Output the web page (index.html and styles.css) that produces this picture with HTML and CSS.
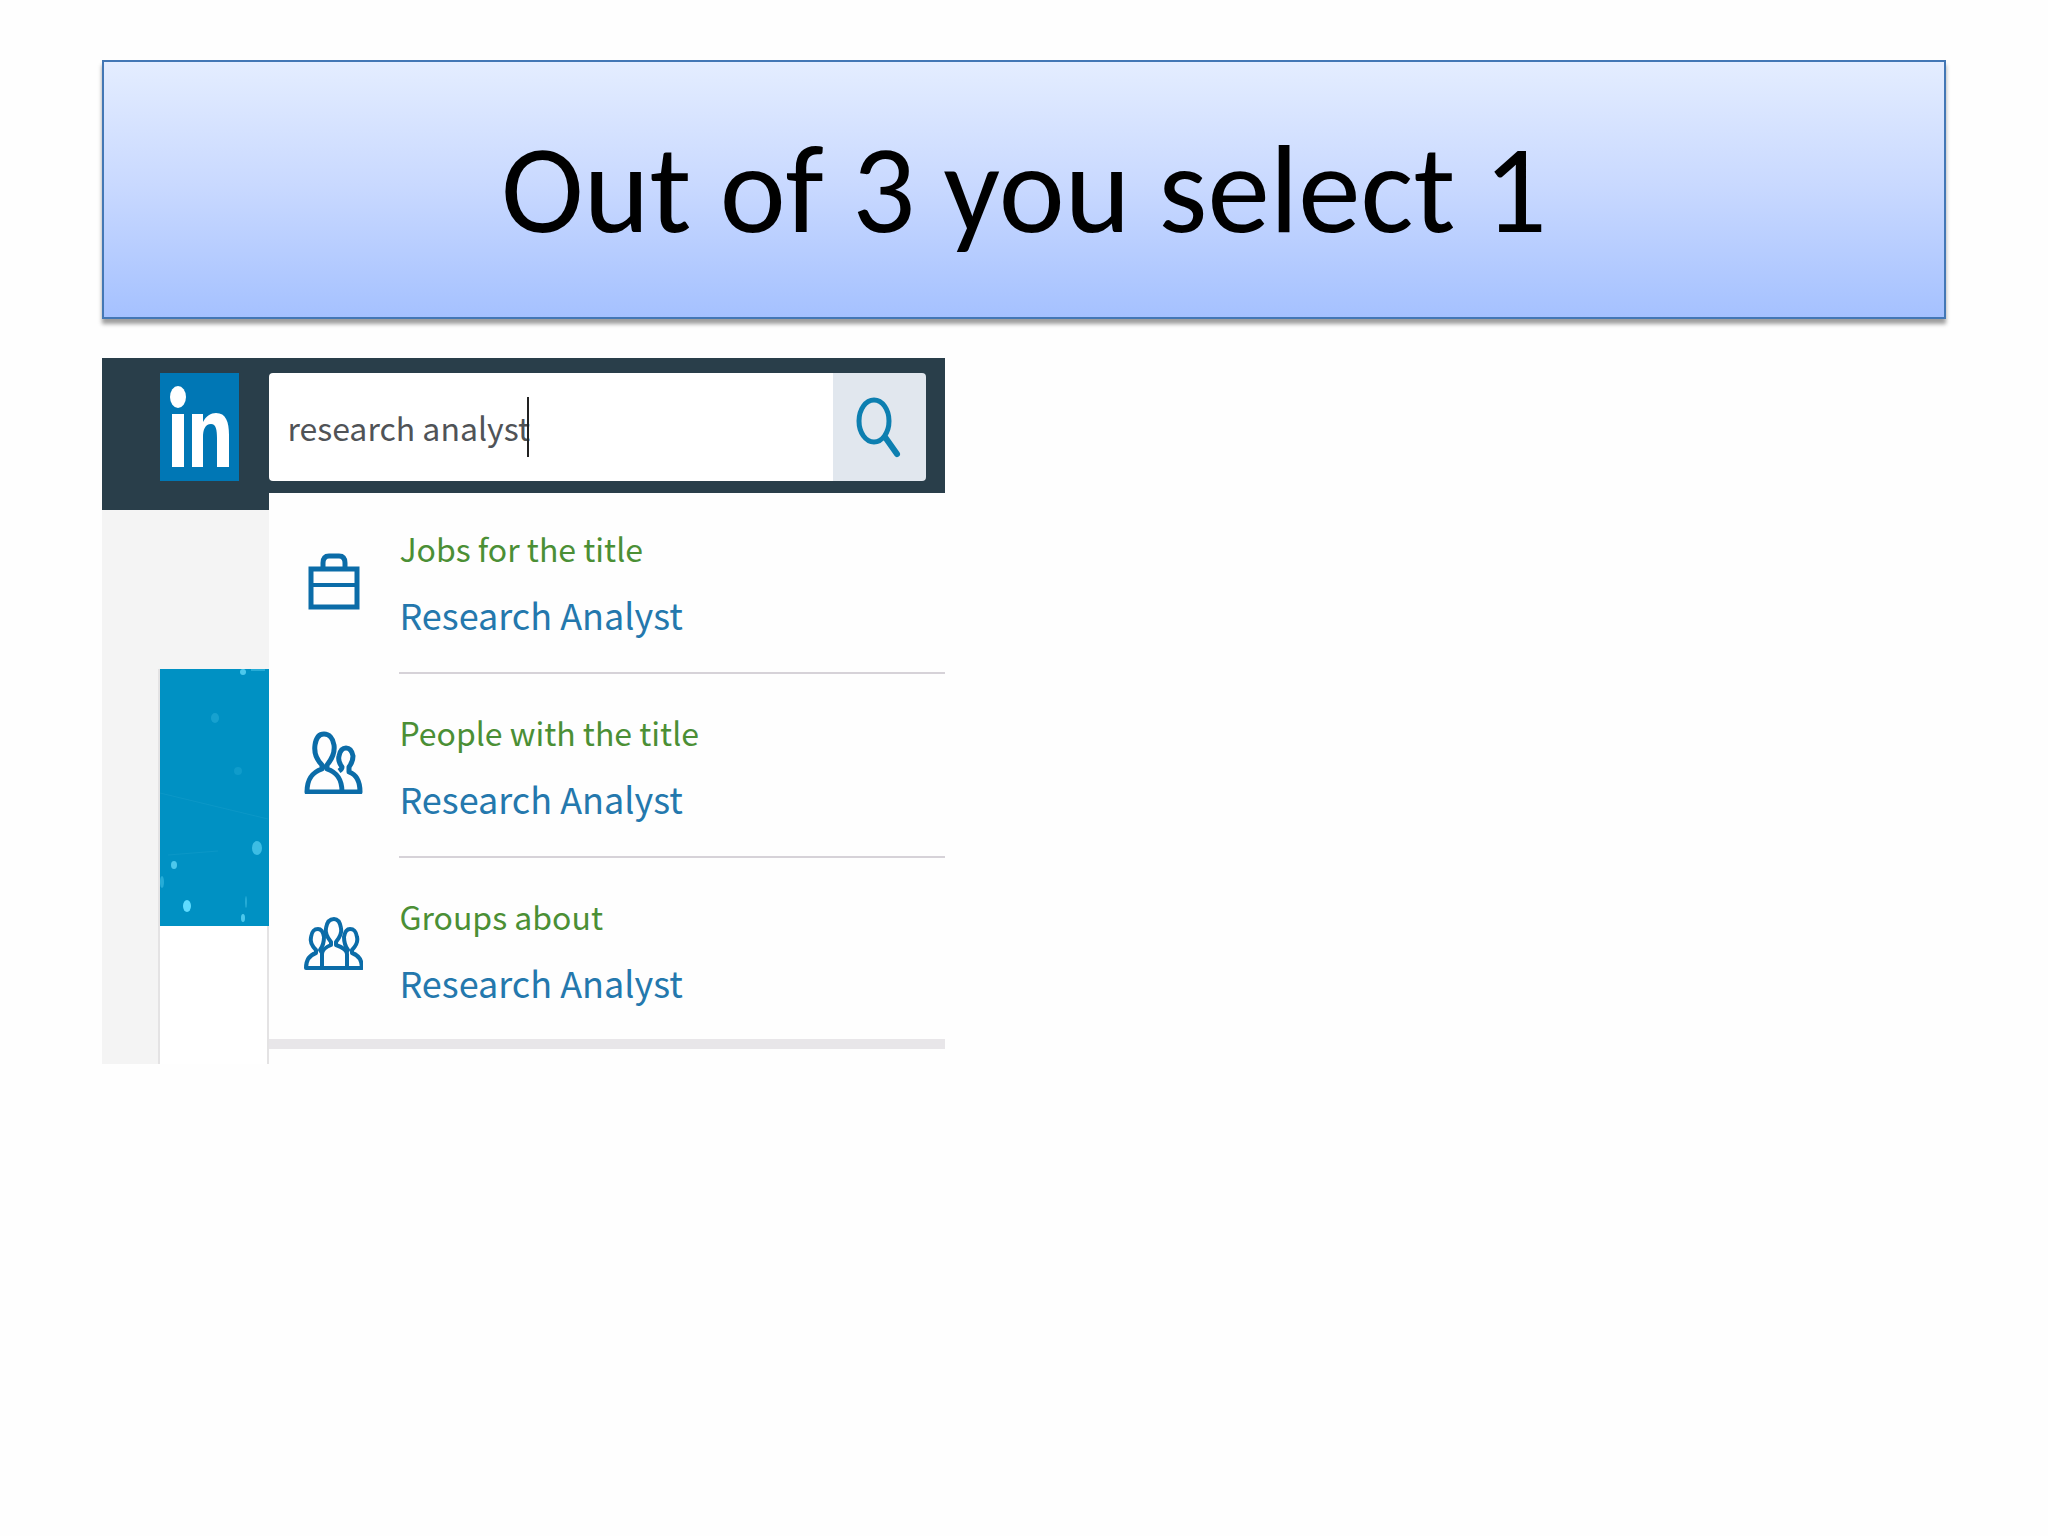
FILE: index.html
```html
<!DOCTYPE html>
<html lang="en">
<head>
  <meta charset="UTF-8" />
  <meta name="viewport" content="width=device-width, initial-scale=1.0" />
  <title>Out of 3 you select 1</title>
  <link rel="stylesheet" href="styles.css">
</head>
<body>
  <main class="slide">
    <h1 class="slide-title">Out of 3 you select 1</h1>

    <div class="panel">
      <div class="side">
        <div class="side-top">
          <svg class="logo" viewBox="0 0 79 108" role="img" aria-label="LinkedIn">
            <rect width="79" height="108" fill="#0077b5" />
            <ellipse cx="18" cy="24" rx="8" ry="11" fill="#fff" />
            <rect x="12" y="41" width="12" height="53" fill="#fff" />
            <path d="M32 41h11v8c3-6 8-9 13-9 10 0 13 9 13 22v32H57V65c0-8-1-14-6-14-6 0-8 6-8 13v30H32z" fill="#fff" />
          </svg>
        </div>
        <div class="card">
          <svg class="cover" viewBox="0 0 109 257" aria-hidden="true">
            <rect width="109" height="257" fill="#0091c3" />
            <g fill="#4cc8ec">
              <ellipse cx="27" cy="237" rx="4" ry="6" fill="#5fdcff" />
              <ellipse cx="14" cy="196" rx="3" ry="4" />
              <ellipse cx="97" cy="179" rx="5" ry="7" opacity=".8" />
              <ellipse cx="83" cy="249" rx="2" ry="4" />
              <ellipse cx="86" cy="233" rx="1" ry="6" opacity=".5" />
              <ellipse cx="55" cy="49" rx="4" ry="5" opacity=".3" />
              <ellipse cx="78" cy="102" rx="4" ry="4" opacity=".2" />
              <ellipse cx="2" cy="213" rx="2" ry="6" opacity=".5" />
              <ellipse cx="83" cy="3" rx="3" ry="3" />
              <rect x="91" y="0" width="14" height="2" opacity=".5" />
            </g>
            <path d="M0 124l108 26M8 186l50-4" stroke="#1c9fce" fill="none" opacity=".4" />
          </svg>
        </div>
      </div>

      <div class="content">
        <form class="search">
          <div class="search-field">
            <input type="text" class="search-input" aria-label="Search" value="research analyst" />
            <span class="caret"></span>
          </div>
          <button type="button" class="search-button" aria-label="Search">
            <svg width="48" height="62" viewBox="0 0 48 62" fill="none" stroke="#0d7fb0" stroke-width="5">
              <ellipse cx="18" cy="25" rx="15" ry="21" />
              <path d="M29 41l12 17" stroke-width="6" stroke-linecap="round" />
            </svg>
          </button>
        </form>

        <ul class="results">
          <li class="result">
            <svg class="icon" viewBox="0 0 60 66" fill="none" stroke="#0b6ca8" stroke-width="5">
              <path d="M8 25h46v38H8z" />
              <path d="M8 41h46" stroke-width="4" />
              <path d="M20 25v-6q0-7 6-7h10q6 0 6 7v6" />
            </svg>
            <a href="#" class="result-link">
              <span class="kind">Jobs for the title</span>
              <span class="term">Research Analyst</span>
            </a>
          </li>
          <li class="result">
            <svg class="icon" viewBox="0 0 60 66" fill="none" stroke="#0b6ca8" stroke-width="5" stroke-linejoin="round">
              <path d="M19 37c-6-6-8-13-7-20 1-7 4-11 9-11s9 4 10 11c1 7-2 14-7 20v4c9 3 15 9 15 23H4c0-14 6-20 15-23z" />
              <path d="M36 43c3-2 3-3 3-4-3-4-4-7-3-11 1-5 3-8 7-8s6 3 7 8c0 4-1 7-4 11v5c6 2 11 7 11 20H39" />
            </svg>
            <a href="#" class="result-link">
              <span class="kind">People with the title</span>
              <span class="term">Research Analyst</span>
            </a>
          </li>
          <li class="result">
            <svg class="icon" viewBox="0 0 60 66" fill="none" stroke="#0b6ca8" stroke-width="4" stroke-linejoin="round">
              <path d="M28 30c-4-5-6-10-5-14 1-6 4-9 8-9s6 3 7 9c1 4-1 9-5 14v3c6 2 11 5 11 9v14H19V42c0-4 4-7 9-9z" />
              <path d="M19 56H3c0-9 4-13 10-15v-3c-4-4-6-9-5-13 1-6 3-8 7-8 3 0 5 2 6 8 0 5-1 9-4 13l2 3" />
              <path d="M44 56h15c0-9-4-13-10-15v-3c4-4 6-9 5-13-1-6-3-8-7-8-3 0-5 2-6 8 0 5 1 9 4 13l-2 3" />
            </svg>
            <a href="#" class="result-link">
              <span class="kind">Groups about</span>
              <span class="term">Research Analyst</span>
            </a>
          </li>
        </ul>
      </div>
    </div>
  </main>
</body>
</html>
```

FILE: styles.css
```css
* {
  box-sizing: border-box;
}
body {
  margin: 0;
  background: #fefefe;
}
.slide {
  padding: 60px 5%;
}
.slide-title {
  display: flex;
  align-items: center;
  justify-content: center;
  min-height: 259px;
  margin: 0 0 39px;
  border: 2px solid #4377b5;
  background: linear-gradient(#e4edff, #c9d9ff 48%, #a5c1ff);
  box-shadow: 0 5px 4px rgba(0, 0, 0, 0.38);
  color: #000;
  font-family: Carlito, Lato, sans-serif;
  font-size: 125px;
  font-weight: 400;
  line-height: 150px;
}
.panel {
  display: grid;
  grid-template-columns: 167px 1fr;
  max-width: 843px;
  font-family: "Noto Sans CJK SC", sans-serif;
}
.side {
  display: flex;
  flex-direction: column;
  background: #f4f4f4;
}
.side-top {
  height: 152px;
  padding: 15px 0 0 58px;
  background: #293e4a;
}
.logo {
  display: block;
  width: 79px;
  height: 108px;
}
.card {
  flex: 1;
  margin: 159px 0 0 56px;
  border: solid #e4e3e4;
  border-width: 0 2px;
  background: #fff;
}
.cover {
  display: block;
  width: 109px;
  height: 257px;
}
.content {
  background: #fefefe;
}
.search {
  display: flex;
  height: 135px;
  padding: 15px 19px 12px 0;
  background: #293e4a;
}
.search-field {
  position: relative;
  flex: 1;
}
.search-input {
  width: 100%;
  height: 108px;
  padding: 0 18px;
  border: 0;
  border-radius: 4px 0 0 4px;
  background: #fff;
  color: #505357;
  font-family: inherit;
  font-size: 32px;
}
.caret {
  position: absolute;
  top: 24px;
  left: 258px;
  width: 2px;
  height: 60px;
  background: #222;
}
.search-button {
  display: flex;
  align-items: center;
  justify-content: center;
  width: 93px;
  height: 108px;
  padding: 0;
  border: 0;
  border-radius: 0 4px 4px 0;
  background: #e1e7ee;
}
.results {
  margin: -3px 0 0;
  padding: 0 0 15px;
  list-style: none;
}
.result {
  display: flex;
  height: 184px;
  padding-left: 34px;
}
.icon {
  width: 60px;
  height: 66px;
  margin: 54px 36px 0 0;
}
.result-link {
  display: flex;
  flex: 1;
  flex-direction: column;
  padding-top: 25px;
  border-bottom: 2px solid #d6d2d8;
  line-height: 66px;
  text-decoration: none;
  white-space: nowrap;
}
.result:last-child {
  height: 191px;
  border-bottom: 10px solid #e8e6e9;
}
.result:last-child .result-link {
  border-bottom: 0;
}
.kind {
  color: #4b8f35;
  font-size: 32px;
}
.term {
  color: #2478ad;
  font-size: 36px;
}
```
